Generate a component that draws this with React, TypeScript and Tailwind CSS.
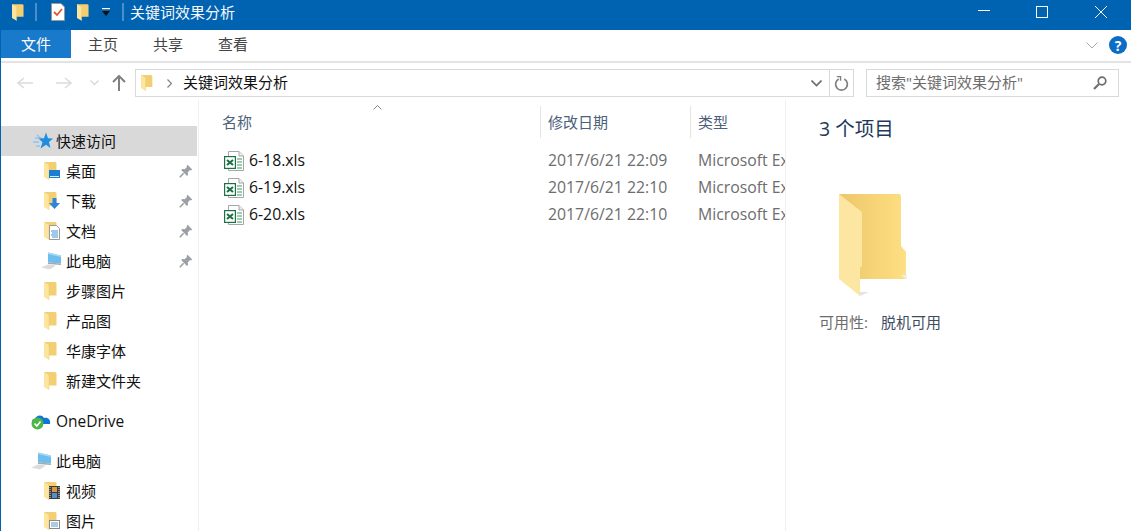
import React from "react";

const FONT = "font-['Open_Sans','Noto_Sans_CJK_SC',sans-serif]";

function Folder({ className = "" }: { className?: string }) {
  return (
    <svg viewBox="0 0 13 18" className={className}>
      <path d="M0 0H11.500L12.500 1V13.500H0Z" fill="#f2cf72" />
      <path d="M0 0L5 3.200V18L0 15Z" fill="#fde59e" />
      <path d="M5 3.200V18" stroke="#e8c469" strokeWidth=".4" />
    </svg>
  );
}

function Pin() {
  return (
    <svg viewBox="0 0 14 14" className="h-[14px] w-[14px]">
      <path d="M8.600 0.800L13.200 5.400L12 6.400L11 6L8.800 8.600L9 11L8 12L2.200 6L3.200 5L5.600 5.300L8 3L7.600 2Z" fill="#9aa0a6" />
      <path d="M4.600 9.200L0.800 13.200" stroke="#9aa0a6" strokeWidth="1.600" />
    </svg>
  );
}

function Star() {
  return (
    <svg viewBox="0 0 20 18" className="h-[18px] w-[20px]">
      <path d="M0 10H6M2 6H7M3 14H7M4 3L9 7" stroke="#8fc4ee" strokeWidth="1.300" />
      <path d="M13 0.500L15 6.200L20 6.500L16 10L17.400 16L13 12.700L7.500 16.500L9.500 10.300L5.500 6.500L11 6.200Z" fill="#1f8ee0" />
    </svg>
  );
}

function Computer() {
  return (
    <svg viewBox="0 0 21 18" className="h-[18px] w-[21px]">
      <path d="M7 0.500L20 3.500V11.500L7 10.500Z" fill="#6dbdee" />
      <path d="M7 0.500L20 3.500V5L7 2Z" fill="#a6daf6" />
      <path d="M7 10.500L20 11.500V13L7 12Z" fill="#a8a8a8" />
      <path d="M0 15.500L7 12.500L15 13.500L9 17.500Z" fill="#dcdcdc" />
    </svg>
  );
}

function Overlay({ kind }: { kind: string }) {
  if (kind === "desktop")
    return (
      <svg viewBox="0 0 11 8" className="absolute bottom-[2px] left-[5px] h-[8px] w-[11px]">
        <rect width="11" height="8" fill="#1a7fd0" />
        <rect x="1" y="6" width="9" height="1" fill="#d5ecfb" />
      </svg>
    );
  if (kind === "down")
    return (
      <svg viewBox="0 0 11 11" className="absolute bottom-[1px] left-[5px] h-[11px] w-[11px]">
        <path d="M3.500 0H7.500V5H11L5.500 11L0 5H3.500Z" fill="#2f86d8" />
      </svg>
    );
  if (kind === "doc")
    return (
      <svg viewBox="0 0 11 15" className="absolute bottom-0 left-[5px] h-[15px] w-[11px]">
        <path d="M.5.5H7.500L10.500 3.500V14.500H.5Z" fill="#fff" stroke="#9a9a9a" />
        <path d="M2 6H9M3 8H9M2 10H9M3 12H9" stroke="#3f93d8" />
      </svg>
    );
  if (kind === "video")
    return (
      <svg viewBox="0 0 11 13" className="absolute bottom-[1px] left-[5px] h-[13px] w-[11px]">
        <rect width="11" height="13" fill="#3b3b3b" />
        <rect x="3" y="1" width="5" height="5" fill="#d9983f" />
        <rect x="3" y="7" width="5" height="5" fill="#4f8fd0" />
        <path d="M1 1V12M10 1V12" stroke="#ddd" strokeDasharray="1 1" />
      </svg>
    );
  return (
    <svg viewBox="0 0 11 9" className="absolute bottom-[1px] left-[5px] h-[9px] w-[11px]">
      <rect x=".5" y=".5" width="10" height="8" fill="#fff" stroke="#8a8a8a" />
      <rect x="2" y="2" width="7" height="5" fill="#a9cbe6" />
    </svg>
  );
}

function NavItem({ label, kind, pin }: { label: string; kind?: string; pin?: boolean }) {
  return (
    <div className="flex h-[30px] items-center pl-[43px] pr-[5px]">
      {kind === "pc" ? (
        <div className="ml-[-3px] mr-[4px] flex w-[21px]"><Computer /></div>
      ) : (
        <div className="relative mr-[9px] h-[18px] w-[13px]">
          <Folder className="h-[18px] w-[13px]" />
          {kind && <Overlay kind={kind} />}
        </div>
      )}
      <span className="flex-1 text-[15px] leading-[20px] text-[#111]">{label}</span>
      {pin && <Pin />}
    </div>
  );
}

function Excel() {
  return (
    <svg viewBox="0 0 20 20" className="h-[20px] w-[20px]">
      <path d="M4.500.5H15L19.500 5V19.500H4.500Z" fill="#fff" stroke="#a6a6a6" />
      <path d="M15 .5V5H19.500" fill="#eee" stroke="#a6a6a6" />
      <path d="M13 8H18M13 11H18M13 14H18M13 17H18" stroke="#9ccdb0" strokeWidth="2" />
      <rect x="0" y="5" width="12" height="13" fill="#1e7145" />
      <rect x="1.200" y="6.200" width="9.600" height="10.600" fill="#fff" />
      <path d="M3 9L9 14M9 9L3 14" stroke="#1e7145" strokeWidth="2.100" />
    </svg>
  );
}

function FileRow({ name, date }: { name: string; date: string }) {
  return (
    <div className="flex h-[27px] items-center">
      <div className="flex w-[330px] items-center pl-[6px]">
        <Excel />
        <span className="ml-[5px] text-[15.8px] text-[#111]">{name}</span>
      </div>
      <span className="w-[150px] whitespace-nowrap text-[15.8px] text-[#6d6d6d]">{date}</span>
      <span className="w-[87px] overflow-hidden whitespace-nowrap text-[15.8px] text-[#6d6d6d]">Microsoft Excel</span>
    </div>
  );
}

export default function App() {
  return (
    <div className={`${FONT} flex h-[531px] w-[1131px] flex-col overflow-hidden border-l border-[#0063b1] bg-white`}>
      {/* Title bar */}
      <div className="flex h-[30px] shrink-0 items-center bg-[#0063b1] pb-[6px] text-[#f4f8fc]">
        <Folder className="ml-[11px] h-[17px] w-[12px]" />
        <div className="ml-[11px] h-[18px] w-[2px] bg-[#4d8ec8]" />
        <svg viewBox="0 0 14 18" className="ml-[14px] h-[18px] w-[14px]">
          <path d="M.5.5H10L13.500 4V17.500H.5Z" fill="#fff" stroke="#999" />
          <path d="M3 9L6 12L11 6" stroke="#e4572e" strokeWidth="1.800" fill="none" />
        </svg>
        <Folder className="ml-[12px] h-[17px] w-[12px]" />
        <svg viewBox="0 0 8 9" className="ml-[13px] h-[9px] w-[8px]">
          <rect width="8" height="1.200" y="0" fill="#fff" />
          <path d="M0 3H8L4 8Z" fill="#111" />
        </svg>
        <div className="ml-[12px] h-[18px] w-[2px] bg-[#4d8ec8]" />
        <span className="ml-[6px] text-[15px] leading-[20px]">关键词效果分析</span>
        <div className="flex-1" />
        <div className="mb-[3px] mr-[46px] h-[1px] w-[12px] bg-white" />
        <div className="mb-[1px] mr-[47px] h-[12px] w-[12px] border border-white" />
        <svg viewBox="0 0 12 12" className="mb-[1px] mr-[24px] h-[12px] w-[12px]">
          <path d="M0 0L12 12M12 0L0 12" stroke="#fff" strokeWidth="1" />
        </svg>
      </div>

      {/* Ribbon tabs */}
      <div className="flex h-[28px] shrink-0 items-center text-[15px]">
        <div className="flex h-full w-[70px] items-center justify-center bg-[#1979ca] text-white">文件</div>
        <span className="ml-[17px] text-[#444]">主页</span>
        <span className="ml-[35px] text-[#444]">共享</span>
        <span className="ml-[35px] text-[#444]">查看</span>
        <div className="flex-1" />
        <svg viewBox="0 0 12 7" className="mr-[11px] mt-[2px] h-[7px] w-[12px]">
          <path d="M.5.5L6 6L11.500 .5" stroke="#a8a8a8" fill="none" />
        </svg>
        <div className="mr-[4px] mt-[2px] flex h-[18px] w-[18px] items-center justify-center rounded-full bg-[#0b6dc6] text-[14px] font-bold text-white">?</div>
      </div>

      {/* Address row */}
      <div className="mt-[3px] flex h-[39px] shrink-0 items-center border-t-2 border-[#e3e3e3] pb-[2px] pt-[5px]">
        <svg viewBox="0 0 16 12" className="ml-[16px] h-[12px] w-[16px]">
          <path d="M7 1L1 6L7 11M1 6H16" stroke="#dcdcdc" strokeWidth="1.600" fill="none" />
        </svg>
        <svg viewBox="0 0 16 12" className="ml-[23px] h-[12px] w-[16px]">
          <path d="M9 1L15 6L9 11M0 6H15" stroke="#dcdcdc" strokeWidth="1.600" fill="none" />
        </svg>
        <svg viewBox="0 0 9 6" className="ml-[18px] h-[6px] w-[9px]">
          <path d="M.5.5L4.500 4.500L8.500 .5" stroke="#d8d8d8" strokeWidth="1.400" fill="none" />
        </svg>
        <svg viewBox="0 0 14 16" className="ml-[13px] h-[16px] w-[14px]">
          <path d="M1 7L7 1L13 7M7 1V16" stroke="#808080" strokeWidth="2" fill="none" />
        </svg>
        <div className="ml-[9px] flex h-[28px] w-[719px] items-center border border-[#d9d9d9]">
          <Folder className="ml-[5px] h-[16px] w-[12px]" />
          <svg viewBox="0 0 5 9" className="ml-[14px] h-[9px] w-[5px]">
            <path d="M.5.5L4.500 4.500L.5 8.500" stroke="#808080" strokeWidth="1.200" fill="none" />
          </svg>
          <span className="ml-[11px] flex-1 pb-[2px] text-[15px] text-[#111]">关键词效果分析</span>
          <svg viewBox="0 0 11 7" className="mr-[7px] h-[7px] w-[11px]">
            <path d="M.5.5L5.500 5.500L10.500 .5" stroke="#6d6d6d" strokeWidth="1.600" fill="none" />
          </svg>
          <div className="flex h-full w-[24px] items-center justify-center border-l border-[#d9d9d9]">
            <svg viewBox="0 0 16 16" className="h-[15px] w-[15px]">
              <path d="M5 3.200A6.300 6.300 0 1 0 11 3.200" stroke="#808080" strokeWidth="1.800" fill="none" />
              <path d="M3 .5H7V5" stroke="#808080" strokeWidth="1.500" fill="none" />
            </svg>
          </div>
        </div>
        <div className="ml-[12px] flex h-[28px] w-[253px] items-center border border-[#d9d9d9] px-[9px]">
          <span className="flex-1 pb-[2px] text-[15px] text-[#6d6d6d]">搜索"关键词效果分析"</span>
          <svg viewBox="0 0 14 14" className="mr-[2px] h-[14px] w-[14px]">
            <circle cx="9" cy="5" r="3.800" stroke="#6d6d6d" strokeWidth="1.700" fill="none" />
            <path d="M6 8L1 13" stroke="#6d6d6d" strokeWidth="2.200" />
          </svg>
        </div>
      </div>

      {/* Body */}
      <div className="flex min-h-0 flex-1">
        {/* Navigation */}
        <div className="w-[198px] shrink-0 border-r border-[#f0f0f0] pt-[26px]">
          <div className="mr-[1px] flex h-[30px] items-center bg-[#d9d9d9] pl-[32px]">
            <Star />
            <span className="ml-[3px] text-[15px] text-[#111]">快速访问</span>
          </div>
          <NavItem label="桌面" kind="desktop" pin />
          <NavItem label="下载" kind="down" pin />
          <NavItem label="文档" kind="doc" pin />
          <NavItem label="此电脑" kind="pc" pin />
          <NavItem label="步骤图片" />
          <NavItem label="产品图" />
          <NavItem label="华康字体" />
          <NavItem label="新建文件夹" />
          <div className="mt-[10px] flex h-[30px] items-center pl-[30px]">
            <svg viewBox="0 0 20 18" className="h-[18px] w-[20px]">
              <path d="M4 12C0 12 0 7 4 7C5 3 11 2 13 6C17 5 20 8 19 12Z" fill="#0f78d4" />
              <circle cx="6.500" cy="11.500" r="6" fill="#4cb648" />
              <path d="M3.500 11.500L5.800 14L9.500 9.500" stroke="#fff" strokeWidth="1.500" fill="none" />
            </svg>
            <span className="ml-[5px] pt-[2px] text-[15.5px] text-[#111]">OneDrive</span>
          </div>
          <div className="mt-[10px] flex h-[30px] items-center pl-[30px]">
            <Computer />
            <span className="ml-[4px] text-[15px] text-[#111]">此电脑</span>
          </div>
          <NavItem label="视频" kind="video" />
          <NavItem label="图片" kind="pic" />
        </div>

        {/* File list */}
        <div className="w-[587px] shrink-0 border-r border-[#f0f0f0] pl-[19px]">
          <div className="relative mt-[6px] flex h-[32px] items-center text-[15px] text-[#4c607a]">
            <svg viewBox="0 0 9 5" className="absolute left-[155px] top-[-1px] h-[5px] w-[9px]">
              <path d="M.5 4.500L4.500 .5L8.500 4.500" stroke="#888" fill="none" />
            </svg>
            <span className="w-[322px] pl-[4px]">名称</span>
            <div className="h-full w-[150px] border-l border-[#e5e5e5] pl-[7px] leading-[32px]">修改日期</div>
            <div className="h-full flex-1 border-l border-[#e5e5e5] pl-[7px] leading-[32px]">类型</div>
          </div>
          <div className="pt-[9px]">
            <FileRow name="6-18.xls" date="2017/6/21 22:09" />
            <FileRow name="6-19.xls" date="2017/6/21 22:10" />
            <FileRow name="6-20.xls" date="2017/6/21 22:10" />
          </div>
        </div>

        {/* Details */}
        <div className="flex-1 pl-[33px] pt-[16px]">
          <div className="text-[19.500px] leading-[26px] text-[#1e395b]">3 个项目</div>
          <svg viewBox="0 0 68 102" className="ml-[20px] mt-[52px] h-[102px] w-[68px]">
            <defs>
              <linearGradient id="fb" x1="0" x2="1" y1="0" y2="0">
                <stop offset="0" stopColor="#edc76a" />
                <stop offset="1" stopColor="#fedf83" />
              </linearGradient>
            </defs>
            <path d="M0 0H60Q62 0 62 2V52L67 58V85H21V74H0Z" fill="url(#fb)" />
            <path d="M67 85L74 81H62Z" fill="#eee" />
            <path d="M0 0L23 18V72L21 74V102L0 85Z" fill="#fde6a2" />
            <path d="M21 102L30 98H21Z" fill="#e4e4e4" />
          </svg>
          <div className="mt-[16px] flex text-[15px] leading-[20px]">
            <span className="w-[62px] text-[#6d6d6d]">可用性:</span>
            <span className="text-[#3f4d62]">脱机可用</span>
          </div>
        </div>
      </div>
    </div>
  );
}
